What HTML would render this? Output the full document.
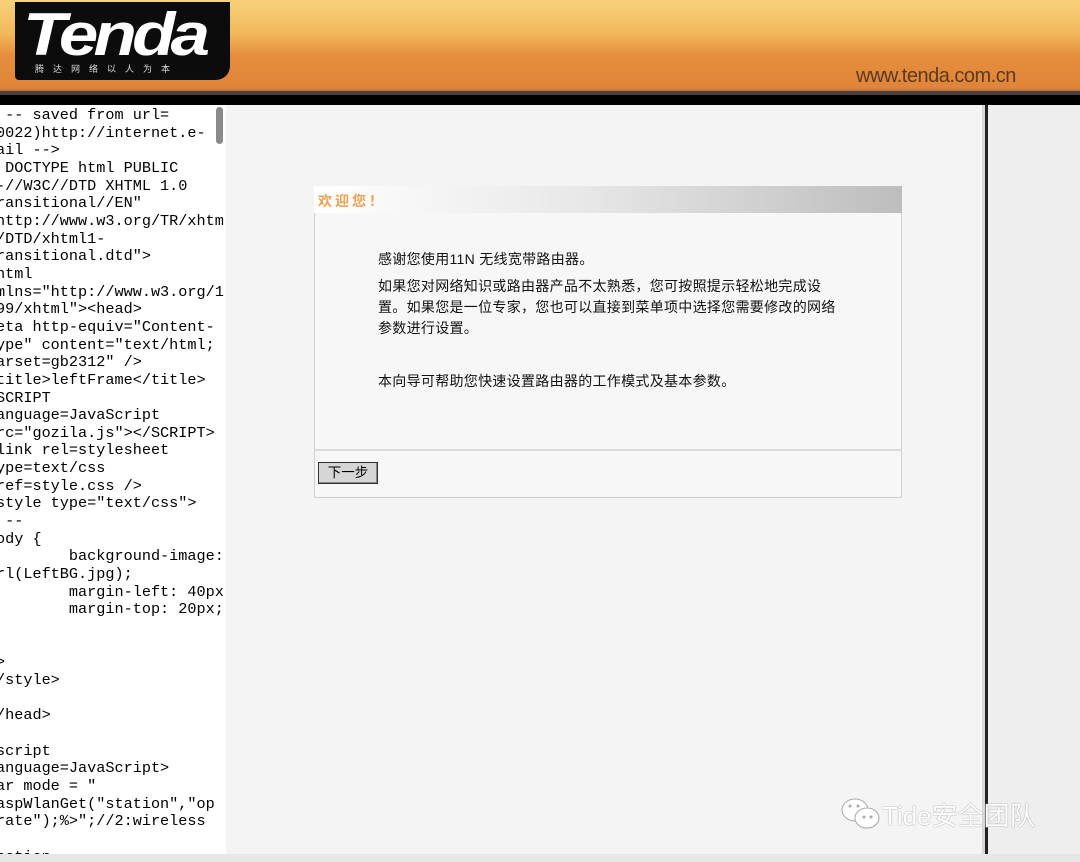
<!DOCTYPE html>
<html><head><meta charset="utf-8"><style>
body{margin:0;width:1080px;height:862px;overflow:hidden;background:#f4f4f4;position:relative;font-family:"Liberation Sans","Noto Sans CJK SC",sans-serif}
.hdr{position:absolute;left:0;top:0;width:1080px;height:92px;background:linear-gradient(#f7d27a 0,#f2b65a 35px,#e58e3c 55px,#e0843a 88px,#a87040 92px)}
.bar1{position:absolute;left:0;top:91px;width:1080px;height:4px;background:#4a4040}
.bar2{position:absolute;left:0;top:95px;width:1080px;height:10px;background:#000}
.logo{position:absolute;left:15px;top:2px;width:215px;height:78px;background:#0c0c0c;border-radius:0 0 14px 4px}
.logo .t{position:absolute;left:8px;top:-2px;color:#fff;font:italic bold 60px "Liberation Sans",sans-serif;letter-spacing:-4px;transform:scaleX(1.18);transform-origin:left}
.logo .s{position:absolute;left:20px;top:60px;color:#ddd;font-size:9px;letter-spacing:9px;font-family:"Liberation Sans","Noto Sans CJK SC",sans-serif}
.url{position:absolute;left:856px;top:65px;color:#5a3a20;font-size:20px;letter-spacing:-0.5px}
.left{position:absolute;left:0;top:105px;width:226px;height:749px;background:#fff;overflow:hidden}
.left pre{margin:0;position:absolute;left:-4px;top:2px;font:15.2px/17.65px "Liberation Mono",monospace;color:#000}
.sb{position:absolute;left:216px;top:107px;width:7px;height:37px;background:#8a8a8a;border-radius:4px}
.div{position:absolute;left:982px;top:105px;width:3px;height:749px;background:#d8d8d8}
.div2{position:absolute;left:985px;top:105px;width:3px;height:749px;background:#222}
.right{position:absolute;left:988px;top:105px;width:92px;height:749px;background:#eeeeee}
.bot{position:absolute;left:0;top:854px;width:1080px;height:8px;background:#e6e6e6}
.box{position:absolute;left:314px;top:186px;width:586px;height:311px;border:1px solid #cfcfcf;border-top:none;background:#f7f7f7}
.bh{position:absolute;left:314px;top:186px;width:588px;height:27px;background:linear-gradient(90deg,#fff 0,#e8e8e8 45%,#bdbdbd 100%)}
.bh span{position:absolute;left:4px;top:5px;color:#f0a050;font-size:14px;font-weight:bold;letter-spacing:3px}
.txt{position:absolute;left:378px;font-size:14px;color:#111;line-height:21px;letter-spacing:0.3px}
.sep{position:absolute;left:315px;top:449px;width:586px;height:2px;background:#dcdcdc}
.btn{position:absolute;left:318px;top:462px;width:58px;height:20px;border:1px solid #333;background:#d6d6d6;font-size:13.5px;text-align:center;line-height:20px;box-shadow:inset -1px -1px #888}
.wm{position:absolute;left:840px;top:796px;color:#fff;font-size:26px;text-shadow:0 0 1px #999,0 0 1px #999}
</style></head><body>
<div class="hdr"></div>
<div class="logo"><div class="t">Tenda</div><div class="s">腾达网络以人为本</div></div>
<div class="url">www.tenda.com.cn</div>
<div class="bar1"></div><div class="bar2"></div>
<div class="left"><pre> -- saved from url=
0022)http://internet.e-
ail -->
 DOCTYPE html PUBLIC
-//W3C//DTD XHTML 1.0
ransitional//EN"
http://www.w3.org/TR/xhtm
/DTD/xhtml1-
ransitional.dtd">
html
mlns="http://www.w3.org/1
99/xhtml"&gt;&lt;head>
eta http-equiv="Content-
ype" content="text/html;
arset=gb2312" />
title>leftFrame&lt;/title>
SCRIPT
anguage=JavaScript
rc="gozila.js">&lt;/SCRIPT>
link rel=stylesheet
ype=text/css
ref=style.css />
style type="text/css">
 --
ody {
        background-image:
rl(LeftBG.jpg);
        margin-left: 40px;
        margin-top: 20px;


>
/style>

/head>

script
anguage=JavaScript>
ar mode = "
aspWlanGet("station","op
rate");%>";//2:wireless

nction</pre></div>
<div class="sb"></div>
<div class="div"></div><div class="div2"></div><div class="right"></div>
<div class="box"></div>
<div class="bh"><span>欢迎您！</span></div>
<div class="txt" style="top:249px">感谢您使用11N 无线宽带路由器。</div>
<div class="txt" style="top:276px">如果您对网络知识或路由器产品不太熟悉，您可按照提示轻松地完成设<br>置。如果您是一位专家，您也可以直接到菜单项中选择您需要修改的网络<br>参数进行设置。</div>
<div class="txt" style="top:371px">本向导可帮助您快速设置路由器的工作模式及基本参数。</div>
<div class="sep"></div>
<div class="btn">下一步</div>
<div class="wm">
<svg width="42" height="34" viewBox="0 0 42 34" style="vertical-align:-6px"><ellipse cx="15" cy="13" rx="13" ry="11" fill="#fff" stroke="#aaa"/><ellipse cx="27" cy="21" rx="12" ry="10" fill="#fff" stroke="#aaa"/><circle cx="24" cy="20" r="1.5" fill="#aaa"/><circle cx="31" cy="20" r="1.5" fill="#aaa"/><circle cx="10" cy="9" r="1.5" fill="#aaa"/><circle cx="18" cy="9" r="1.5" fill="#aaa"/></svg>Tide安全团队</div>
<div class="bot"></div>
</body></html>
